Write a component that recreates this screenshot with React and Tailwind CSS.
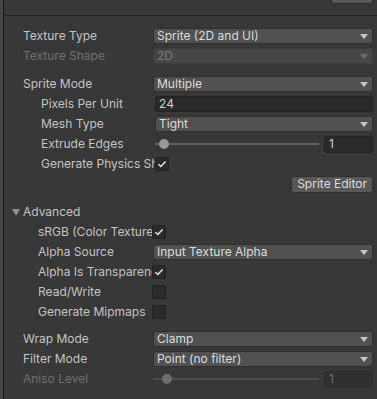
import React from 'react';

const Arrow = ({ dim }) => (
  <svg width="8" height="5" viewBox="0 0 8 5" className="shrink-0">
    <path d="M0 0h8L4 5z" fill={dim ? '#6a6a6a' : '#c4c4c4'} />
  </svg>
);

const Check = () => (
  <svg width="10" height="10" viewBox="0 0 10 10">
    <path d="M1.5 5.2l2.3 2.3L8.6 2.4" fill="none" stroke="#e4e4e4" strokeWidth="1.5" />
  </svg>
);

function Row({ label, indent = 19, labelW = 130, dim, gapTop, children }) {
  return (
    <div
      className={`flex h-5 items-center pr-[4px] ${gapTop ? 'mt-2' : ''}`}
      style={{ paddingLeft: indent }}
    >
      <div
        className={`shrink-0 overflow-hidden whitespace-nowrap ${dim ? 'text-[#707070]' : 'text-[#c4c4c4]'}`}
        style={{ width: labelW }}
      >
        {label}
      </div>
      <div className="flex flex-1 items-center min-w-0">{children}</div>
    </div>
  );
}

function Dropdown({ value, dim }) {
  return (
    <div
      className={`flex h-4 flex-1 items-center justify-between rounded-[3px] border pl-[3px] pr-[4px] ${
        dim ? 'border-[#3e3e3e] bg-[#474747] text-[#7b7b7b]' : 'border-[#2f2f2f] bg-[#515151] text-[#dcdcdc]'
      }`}
    >
      <span className="leading-none">{value}</span>
      <Arrow dim={dim} />
    </div>
  );
}

function Checkbox({ checked }) {
  return (
    <div className="flex h-[14px] w-[14px] items-center justify-center rounded-[2px] border border-[#202020] bg-[#2b2b2b]">
      {checked && <Check />}
    </div>
  );
}

function Slider({ dim, thumb }) {
  return (
    <>
      <div className="relative flex h-4 flex-1 items-center">
        <div className={`h-[2px] w-full ${dim ? 'bg-[#4d4d4d]' : 'bg-[#5e5e5e]'}`} />
        <div
          className={`absolute top-[3px] h-[10px] w-[10px] rounded-full ${dim ? 'bg-[#6d6d6d]' : 'bg-[#999999]'}`}
          style={{ left: thumb }}
        />
      </div>
      <div
        className={`ml-[5px] flex h-[17px] w-[49px] items-center rounded-[3px] border pl-[4px] ${
          dim ? 'border-[#2c2c2c] bg-[#303030] text-[#6e6e6e]' : 'border-[#212121] bg-[#2a2a2a] text-[#d2d2d2]'
        }`}
      >
        1
      </div>
    </>
  );
}

export default function App() {
  return (
    <div
      className="flex h-[399px] w-[377px] overflow-hidden bg-[#383838] text-[12px]"
      style={{ fontFamily: 'Inter, "Noto Sans", sans-serif' }}
    >
      <div className="w-[3px] shrink-0 bg-[#454545]" />
      <div className="flex flex-1 flex-col border-l border-[#1c1c1c]">
        <div className="flex h-4 shrink-0 justify-end border-b border-[#232323] pr-[4px]">
          <div className="h-[4px] w-[42px] rounded-b-[3px] border border-t-0 border-[#2c2c2c] bg-[#585858]" />
        </div>
        <div className="pt-[10px]">
          <Row label="Texture Type">
            <Dropdown value="Sprite (2D and UI)" />
          </Row>
          <Row label="Texture Shape" dim>
            <Dropdown value="2D" dim />
          </Row>
          <Row label="Sprite Mode" gapTop>
            <Dropdown value="Multiple" />
          </Row>
          <Row label="Pixels Per Unit" indent={37} labelW={114}>
            <div className="flex h-4 flex-1 items-center rounded-[3px] border border-[#212121] bg-[#2a2a2a] pl-[3px] text-[#d2d2d2]">
              24
            </div>
          </Row>
          <Row label="Mesh Type" indent={37} labelW={114}>
            <Dropdown value="Tight" />
          </Row>
          <Row label="Extrude Edges" indent={37} labelW={114}>
            <Slider thumb={4} />
          </Row>
          <Row label="Generate Physics Shape" indent={37} labelW={114}>
            <Checkbox checked />
          </Row>
          <div className="flex h-5 items-center justify-end pr-[4px]">
            <div className="flex h-[17px] items-center rounded-[3px] border border-[#303030] bg-[#585858] px-[5px] text-[#dcdcdc]">
              Sprite Editor
            </div>
          </div>
          <div className="mt-2 flex h-5 items-center pl-[8px] text-[#c4c4c4]">
            <svg width="8" height="7" viewBox="0 0 8 7" className="mr-[3px]">
              <path d="M0 0h8L4 7z" fill="#8c8c8c" />
            </svg>
            Advanced
          </div>
          <Row label="sRGB (Color Texture)" indent={34} labelW={114}>
            <Checkbox checked />
          </Row>
          <Row label="Alpha Source" indent={34} labelW={115}>
            <Dropdown value="Input Texture Alpha" />
          </Row>
          <Row label="Alpha Is Transparency" indent={34} labelW={114}>
            <Checkbox checked />
          </Row>
          <Row label="Read/Write" indent={34} labelW={114}>
            <Checkbox />
          </Row>
          <Row label="Generate Mipmaps" indent={34} labelW={114}>
            <Checkbox />
          </Row>
          <div className="mt-[7px]" />
          <Row label="Wrap Mode">
            <Dropdown value="Clamp" />
          </Row>
          <Row label="Filter Mode">
            <Dropdown value="Point (no filter)" />
          </Row>
          <Row label="Aniso Level" dim>
            <Slider dim thumb={9} />
          </Row>
        </div>
      </div>
    </div>
  );
}
